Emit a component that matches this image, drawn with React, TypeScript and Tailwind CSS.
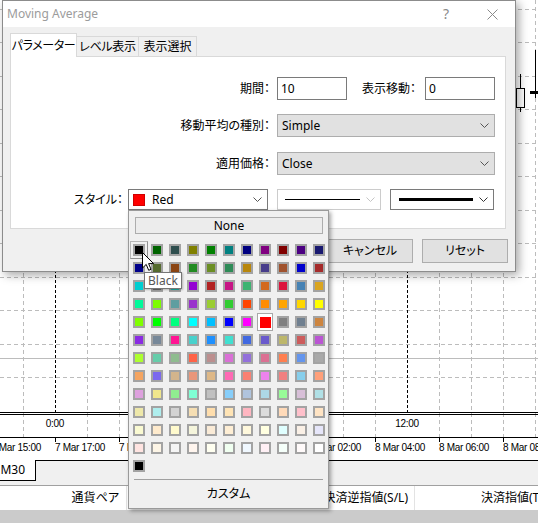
import type { ReactNode } from 'react';

const COLORS = [
  '#000000', '#006400', '#2F4F4F', '#808000', '#008000', '#008080', '#000080', '#800080', '#800000', '#4B0082', '#191970',
  '#00008B', '#556B2F', '#8B4513', '#228B22', '#6B8E23', '#2E8B57', '#B8860B', '#483D8B', '#A0522D', '#0000CD', '#A52A2A',
  '#00CED1', '#696969', '#20B2AA', '#9400D3', '#B22222', '#C71585', '#3CB371', '#D2691E', '#DC143C', '#4682B4', '#DAA520',
  '#00FA9A', '#7CFC00', '#5F9EA0', '#9932CC', '#9ACD32', '#32CD32', '#FF4500', '#FF8C00', '#FFA500', '#FFD700', '#FFFF00',
  '#7FFF00', '#00FF00', '#00FF7F', '#00FFFF', '#00BFFF', '#0000FF', '#FF00FF', '#FF0000', '#808080', '#708090', '#CD853F',
  '#8A2BE2', '#778899', '#FF1493', '#48D1CC', '#1E90FF', '#40E0D0', '#4169E1', '#6A5ACD', '#BDB76B', '#CD5C5C', '#BA55D3',
  '#ADFF2F', '#66CDAA', '#8FBC8F', '#FF6347', '#BC8F8F', '#DA70D6', '#9370DB', '#DB7093', '#FF7F50', '#6495ED', '#A9A9A9',
  '#F4A460', '#7B68EE', '#D2B48C', '#E9967A', '#DEB887', '#FF69B4', '#FA8072', '#EE82EE', '#F08080', '#87CEEB', '#FFA07A',
  '#DDA0DD', '#F0E68C', '#90EE90', '#7FFFD4', '#C0C0C0', '#87CEFA', '#B0C4DE', '#ADD8E6', '#98FB98', '#D8BFD8', '#B0E0E6',
  '#EEE8AA', '#AFEEEE', '#D3D3D3', '#F5DEB3', '#FFDEAD', '#FFE4B5', '#FFB6C1', '#DCDCDC', '#FFDAB9', '#FFC0CB', '#FFE4C4',
  '#FAFAD2', '#FFEBCD', '#FFFACD', '#F5F5DC', '#FAEBD7', '#FFEFD5', '#FFF8DC', '#FFFFE0', '#E0FFFF', '#FAF0E6', '#E6E6FA',
  '#FFE4E1', '#FDF5E6', '#F5F5F5', '#FFF5EE', '#FFFFF0', '#F0FFF0', '#F0F8FF', '#FFF0F5', '#F5FFFA', '#FFFAFA', '#FFFFFF',
  '#000000',
];

const SELECTED = 51; // Red
const HOVER = 0; // Black

function Chevron({ color = '#555' }: { color?: string }) {
  return (
    <svg width="9" height="5" viewBox="0 0 9 5" className="shrink-0">
      <path d="M0.5 0.5 L4.5 4.5 L8.5 0.5" fill="none" stroke={color} />
    </svg>
  );
}

function Chart() {
  const vx = Array.from({ length: 17 }, (_, i) => 23 + i * 32);
  const hy = [9, 42, 76, 109, 143, 176, 210, 243, 277, 310, 344, 377];
  const ticks = [-9, 55, 119, 183, 247, 311, 375, 439, 503];
  const labels = ['7 Mar 15:00', '7 Mar 17:00', '7 Mar 19:00', '7 Mar 21:00', '7 Mar 23:00', '8 Mar 02:00', '8 Mar 04:00', '8 Mar 06:00', '8 Mar 08:00'];
  return (
    <svg width="538" height="460" className="block" fontFamily="'Liberation Sans', Arial, sans-serif" fontSize="10" letterSpacing="-0.3">
      <rect width="538" height="460" fill="#fff" />
      {hy.map((y) => (
        <line key={y} x1="0" x2="538" y1={y + 0.5} y2={y + 0.5} stroke="#bcbcbc" strokeDasharray="4 3" />
      ))}
      <line x1="0" x2="538" y1="358.5" y2="358.5" stroke="#bcbcbc" />
      {vx.map((x) => {
        const major = x === 55 || x === 407;
        return (
          <line
            key={x}
            x1={x + 0.5}
            x2={x + 0.5}
            y1="0"
            y2={major ? 412 : 437}
            stroke={major ? '#000' : '#bcbcbc'}
            strokeDasharray={major ? '3 2' : '4 3'}
          />
        );
      })}
      {/* candles at the right edge */}
      <line x1="520.5" x2="520.5" y1="74" y2="112" stroke="#000" />
      <rect x="516.5" y="88.5" width="8" height="19" fill="#fff" stroke="#000" />
      <line x1="535.5" x2="535.5" y1="50" y2="98" stroke="#000" />
      <rect x="530" y="91" width="10" height="3" fill="#000" />

      <line x1="0" x2="538" y1="412.5" y2="412.5" stroke="#000" />
      <line x1="0" x2="538" y1="414.5" y2="414.5" stroke="#000" />
      <text x="55" y="427" textAnchor="middle">0:00</text>
      <text x="407" y="427" textAnchor="middle">12:00</text>
      <line x1="0" x2="538" y1="437.5" y2="437.5" stroke="#000" />
      {ticks.map((t, i) => (
        <g key={t}>
          <line x1={t + 0.5} x2={t + 0.5} y1="437" y2="442" stroke="#000" />
          <text x={t} y="451">{labels[i]}</text>
        </g>
      ))}
    </svg>
  );
}

function Select({ w, children, gray, border = 'border-[#7a7a7a]', chevron }: { w: string; children: ReactNode; gray?: boolean; border?: string; chevron?: string }) {
  return (
    <div className={`${w} h-full border ${border} ${gray ? 'bg-[#e1e1e1]' : 'bg-white'} flex items-center pl-[4px] pr-[5px]`}>
      <div className="flex-1 flex items-center min-w-0">{children}</div>
      <Chevron color={chevron} />
    </div>
  );
}

function Dialog() {
  return (
    <div className="absolute left-[2px] top-0 w-[514px] h-[272px] border border-[#8c8c8c] bg-[#f0f0f0] shadow-[3px_3px_9px_rgba(0,0,0,0.35)] flex flex-col">
      <div className="h-[26px] bg-white flex items-center pl-[4px] text-[12px] text-[#9c9c9c]">
        <span>Moving Average</span>
        <div className="ml-auto w-[46px] h-full flex items-center justify-center text-[14px] text-[#8a8a8a]">?</div>
        <div className="w-[46px] h-full flex items-center justify-center">
          <svg width="11" height="11" viewBox="0 0 11 11">
            <path d="M0.5 0.5 L10.5 10.5 M10.5 0.5 L0.5 10.5" stroke="#8a8a8a" />
          </svg>
        </div>
      </div>

      <div className="flex-1 pl-[7px] pr-[7px] pt-[6px] text-[12px] text-black">
        <div className="flex items-end h-[23px] whitespace-nowrap">
          <div className="relative z-10 -mb-px w-[67px] h-[24px] bg-white border border-b-0 border-[#d9d9d9] flex items-center justify-center tracking-[-0.4px]">パラメーター</div>
          <div className="w-[63px] h-[20px] -ml-px border border-b-0 border-[#d9d9d9] flex items-center justify-center tracking-[-0.3px]">レベル表示</div>
          <div className="w-[59px] h-[20px] -ml-px border border-b-0 border-[#d9d9d9] flex items-center justify-center">表示選択</div>
        </div>

        <div className="w-[496px] h-[173px] bg-white border border-[#d9d9d9] pt-[20px] whitespace-nowrap">
          <div className="flex items-center h-[23px]">
            <div className="w-[259px] text-right">期間：</div>
            <div className="ml-[7px] w-[70px] h-full border border-[#7a7a7a] flex items-center pl-[3px]">10</div>
            <div className="ml-[15px] w-[63px]">表示移動：</div>
            <div className="w-[70px] h-full border border-[#7a7a7a] flex items-center pl-[3px]">0</div>
          </div>
          <div className="flex items-center h-[23px] mt-[14px]">
            <div className="w-[259px] text-right">移動平均の種別：</div>
            <div className="ml-[7px] h-full">
              <Select w="w-[218px]" gray border="border-[#adadad]">Simple</Select>
            </div>
          </div>
          <div className="flex items-center h-[23px] mt-[15px]">
            <div className="w-[259px] text-right">適用価格：</div>
            <div className="ml-[7px] h-full">
              <Select w="w-[218px]" gray border="border-[#adadad]">Close</Select>
            </div>
          </div>
          <div className="flex items-center h-[21px] mt-[14px]">
            <div className="w-[112px] text-right">スタイル：</div>
            <div className="ml-[5px] h-full">
              <Select w="w-[140px]">
                <span className="w-[12px] h-[12px] bg-[#ff0000] border border-[#d00000]" />
                <span className="ml-[7px]">Red</span>
              </Select>
            </div>
            <div className="ml-[9px] h-full">
              <Select w="w-[104px]" border="border-[#cccccc]" chevron="#c4c4c4">
                <span className="ml-[3px] w-[75px] h-px bg-black" />
              </Select>
            </div>
            <div className="ml-[9px] h-full">
              <Select w="w-[104px]" chevron="#333">
                <span className="ml-[4px] w-[74px] h-[3px] bg-black" />
              </Select>
            </div>
          </div>
        </div>

        <div className="flex justify-end gap-[9px] mt-[10px]">
          {['OK', 'キャンセル', 'リセット'].map((t) => (
            <div key={t} className="w-[86px] h-[24px] bg-[#e1e1e1] border border-[#adadad] flex items-center justify-center">{t}</div>
          ))}
        </div>
      </div>
    </div>
  );
}

function ColorPopup() {
  return (
    <div className="absolute left-[128px] top-[210px] w-[201px] h-[299px] bg-[#f0f0f0] border border-[#9a9a9a] shadow-[2px_2px_4px_rgba(0,0,0,0.35)] flex flex-col text-[12px] text-black">
      <div className="ml-[6px] mt-[6px] w-[188px] h-[17px] border border-[#adadad] bg-[#ececec] flex items-center justify-center">None</div>
      <div className="ml-[4px] mt-[10px] grid grid-cols-[repeat(11,12px)] auto-rows-[12px] gap-[6px]">
        {COLORS.map((c, i) => (
          <div key={i} className="relative w-[12px] h-[12px]">
            {i === SELECTED && <span className="absolute -inset-x-[2px] -inset-y-[3px] bg-white border border-[#a8a8a8]" />}
            {i === HOVER && <span className="absolute -inset-[3px] border border-[#b5b5b5] border-r-[#8f8f8f] border-b-[#8f8f8f]" />}
            {i === SELECTED ? (
              <span className="absolute inset-[0.5px] block" style={{ backgroundColor: c }} />
            ) : (
              <span className="relative block w-[12px] h-[12px] border-2 border-[#a3a3a3]" style={{ backgroundColor: c }} />
            )}
          </div>
        ))}
      </div>
      <div className="ml-[5px] mt-[7px] w-[189px] h-px bg-[#a0a0a0]" />
      <div className="flex-1 flex items-center justify-center">カスタム</div>
    </div>
  );
}

export default function App() {
  return (
    <div className="relative w-[538px] h-[523px] overflow-hidden bg-white font-['Noto_Sans','Noto_Sans_CJK_JP',sans-serif] [font-feature-settings:'palt'] leading-none">
      <Chart />
      <div className="flex items-start h-[26px] bg-[#f0f0f0] border-b border-[#a0a0a0]">
        <div className="w-[36px] h-[21px] bg-white border-r border-b border-black flex items-center justify-end pr-[10px] overflow-hidden text-[12px] whitespace-nowrap">
          USDJPY,M30
        </div>
        <div className="flex-1 h-px bg-black" />
      </div>
      <div className="flex h-[24px] bg-white text-[12px] whitespace-nowrap">
        <div className="w-[127px] border-r border-[#e3e3e3] flex items-center justify-end pr-[7px]">通貨ペア</div>
        <div className="w-[288px] border-r border-[#e3e3e3] flex items-center justify-end pr-[6px]">決済逆指値(S/L)</div>
        <div className="flex-1 flex items-center pl-[66px] overflow-hidden">決済指値(T/P)</div>
      </div>
      <div className="h-[14px] bg-[#cbcbcb]" />

      <Dialog />
      <ColorPopup />

      <div className="absolute left-[144px] top-[272px] h-[17px] px-[3px] bg-white border border-[#767676] shadow-[1px_1px_2px_rgba(0,0,0,0.25)] flex items-center text-[12px] text-[#575757]">
        Black
      </div>
      <svg className="absolute left-[142px] top-[252px]" width="13" height="20" viewBox="0 0 13 20">
        <path d="M0.5 0.5 L0.5 16 L4.2 12.4 L6.7 18.3 L9 17.3 L6.6 11.6 L11.6 11.6 Z" fill="#fff" stroke="#000" strokeLinejoin="round" />
      </svg>
    </div>
  );
}
